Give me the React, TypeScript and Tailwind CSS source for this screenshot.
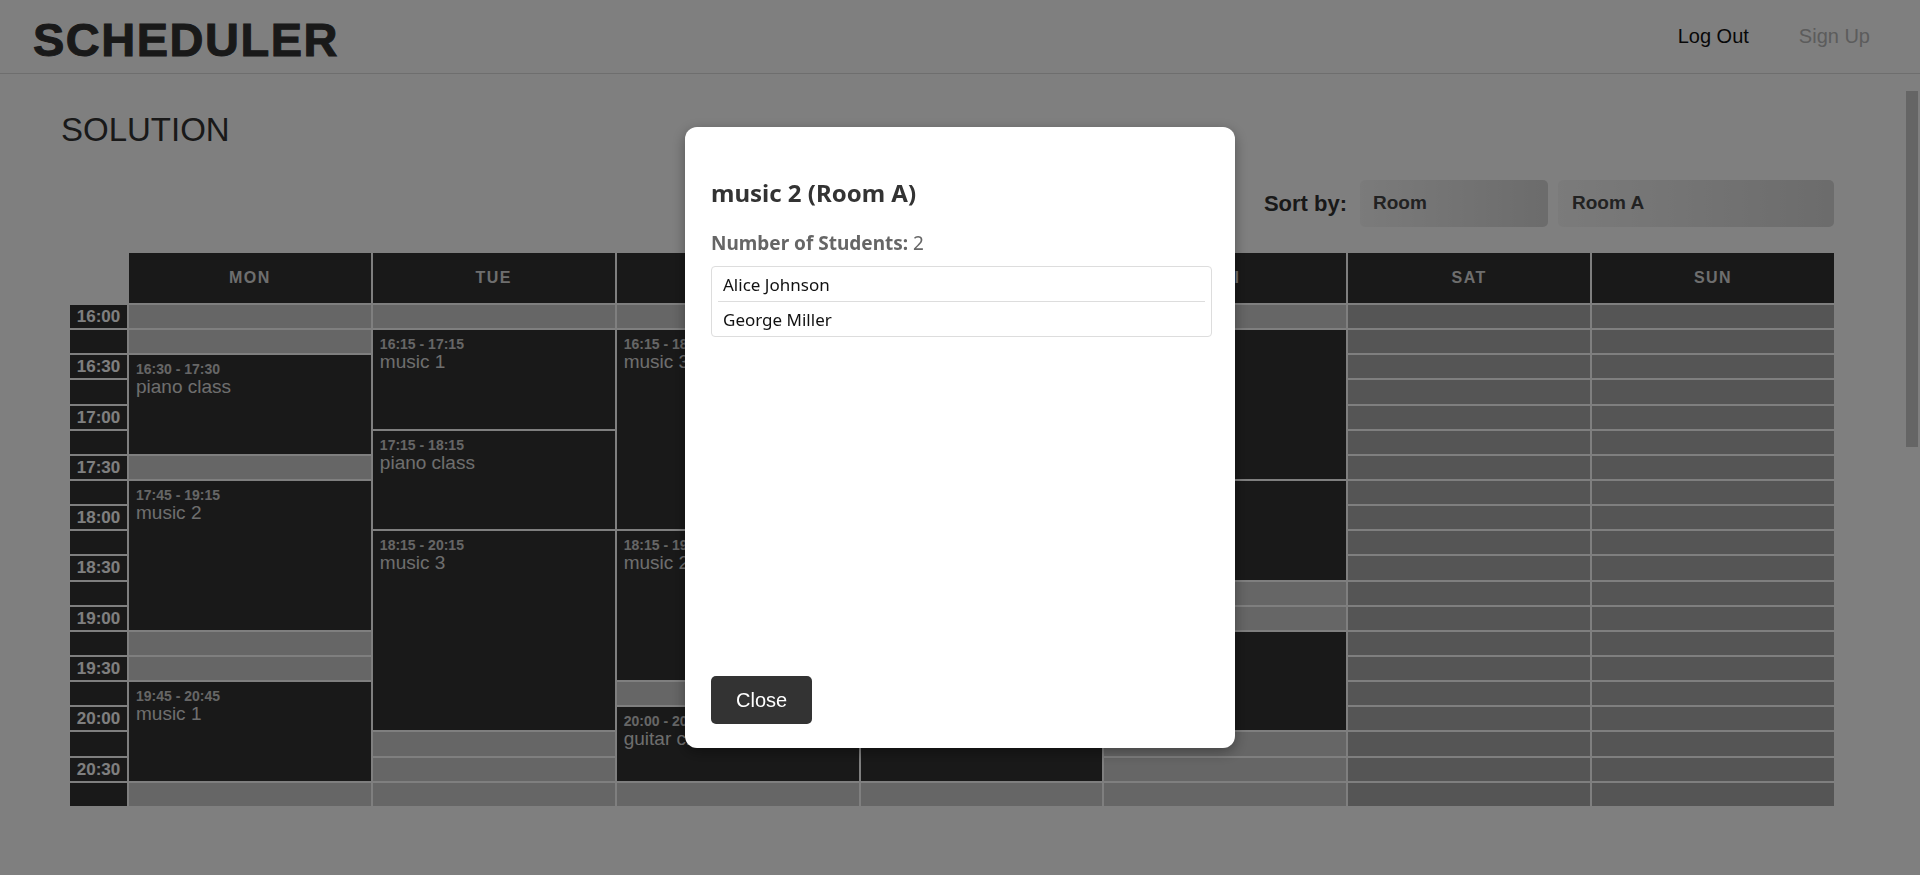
import React from 'react';

type Lesson = { start: number; len: number; title: string };

const DAYS = ['MON', 'TUE', 'WED', 'THU', 'FRI', 'SAT', 'SUN'];
const WEEKEND = ['SAT', 'SUN'];
const SLOTS = 20; // 16:00 - 20:45, 15 min each

const lessons: Record<string, Lesson[]> = {
  MON: [
    { start: 2, len: 4, title: 'piano class' },
    { start: 7, len: 6, title: 'music 2' },
    { start: 15, len: 4, title: 'music 1' },
  ],
  TUE: [
    { start: 1, len: 4, title: 'music 1' },
    { start: 5, len: 4, title: 'piano class' },
    { start: 9, len: 8, title: 'music 3' },
  ],
  WED: [
    { start: 1, len: 8, title: 'music 3' },
    { start: 9, len: 6, title: 'music 2' },
    { start: 16, len: 3, title: 'guitar class' },
  ],
  THU: [
    { start: 1, len: 6, title: 'music 2' },
    { start: 8, len: 4, title: 'piano class' },
    { start: 13, len: 6, title: 'music 1' },
  ],
  FRI: [
    { start: 1, len: 6, title: 'guitar class' },
    { start: 7, len: 4, title: 'music 3' },
    { start: 13, len: 4, title: 'piano class' },
  ],
  SAT: [],
  SUN: [],
};

const students = ['Alice Johnson', 'George Miller'];

const fmt = (slot: number) => {
  const m = 16 * 60 + slot * 15;
  return `${Math.floor(m / 60)}:${String(m % 60).padStart(2, '0')}`;
};

function ScheduleTable() {
  const rows = [];
  for (let r = 0; r < SLOTS; r++) {
    const cells: React.ReactNode[] = [];
    DAYS.forEach((day) => {
      const list = lessons[day];
      const lesson = list.find((l) => l.start === r);
      if (lesson) {
        cells.push(
          <td key={day} rowSpan={lesson.len} className="bg-[#333] p-0 pl-[7px] pt-[7px] align-top">
            <div className="text-[14px] font-bold leading-[14px] text-[#ccc]">
              {fmt(lesson.start)} - {fmt(lesson.start + lesson.len)}
            </div>
            <div className="text-[19px] leading-[21px] text-[#ddd]">{lesson.title}</div>
          </td>
        );
        return;
      }
      if (list.some((l) => r > l.start && r < l.start + l.len)) return;
      cells.push(
        <td key={day} className={`h-[23.15px] p-0 ${WEEKEND.includes(day) ? 'bg-[#aaa]' : 'bg-[#ccc]'}`} />
      );
    });
    rows.push(
      <tr key={r}>
        <td className="h-[23.15px] bg-[#333] p-0 text-center text-[17px] font-bold leading-[23px] text-white">
          {r % 2 === 0 ? fmt(r) : ''}
        </td>
        {cells}
      </tr>
    );
  }

  return (
    <table className="ml-[68px] w-[1768px] table-fixed border-separate border-spacing-[2px]">
      <thead>
        <tr>
          <th className="w-[57px] p-0" />
          {DAYS.map((d) => (
            <th key={d} className="h-[50px] bg-[#333] p-0 text-center text-[16px] font-bold tracking-[1.5px] text-[#ddd]">
              {d}
            </th>
          ))}
        </tr>
      </thead>
      <tbody>{rows}</tbody>
    </table>
  );
}

function StudentsModal() {
  return (
    <div className="fixed inset-0 flex items-center justify-center bg-black/50">
      <div className="flex h-[621px] w-[550px] flex-col rounded-[12px] bg-white pb-[24px] pl-[26px] pr-[23px] pt-[50px] font-['Noto_Sans',sans-serif] shadow-[0_4px_14px_rgba(0,0,0,0.35)]">
        <h2 className="text-[24px] font-bold leading-[32px] text-[#333]">music 2 (Room A)</h2>
        <p className="mt-[22px] text-[19px] leading-[25px] text-[#666]">
          <span className="font-bold">Number of Students:</span> 2
        </p>
        <ul className="mt-[10px] rounded-[4px] border border-[#ddd] px-[6px]">
          {students.map((s, i) => (
            <li
              key={s}
              className={`pb-[4px] pl-[5px] pt-[6px] text-[17px] leading-[24px] text-[#111] ${i < students.length - 1 ? 'border-b border-[#ddd]' : ''}`}
            >
              {s}
            </li>
          ))}
        </ul>
        <button className="mt-auto w-fit rounded-[5px] bg-[#333] px-[25px] py-[12px] font-['Liberation_Sans',Arial,sans-serif] text-[20px] leading-[24px] text-white">
          Close
        </button>
      </div>
    </div>
  );
}

export default function App() {
  return (
    <div className="flex h-screen flex-col bg-white font-['Liberation_Sans',Arial,sans-serif]">
      <header className="flex h-[74px] shrink-0 items-center justify-between border-b border-[#ddd] pl-[33px] pr-[50px]">
        <h1 className="mt-[6px] text-[47px] font-bold leading-[47px] tracking-[1.5px] text-[#333] [-webkit-text-stroke:1px_#333]">
          SCHEDULER
        </h1>
        <nav className="flex items-center gap-[50px] text-[20px] leading-[23px]">
          <a className="text-[#111]">Log Out</a>
          <a className="text-[#b8b8b8]">Sign Up</a>
        </nav>
      </header>

      <main className="flex min-h-0 flex-1">
        <div className="flex-1 overflow-y-auto [scrollbar-width:none]">
          <div className="min-h-[1764px] pt-[37px]">
            <h2 className="pl-[61px] text-[33px] leading-[37px] text-[#333]">SOLUTION</h2>

            <div className="mt-[32px] flex items-center justify-end pr-[72px]">
              <span className="mr-[13px] text-[22px] font-bold text-[#333]">Sort by:</span>
              <select className="h-[47px] w-[188px] appearance-none rounded-[5px] bg-linear-to-r from-[#f6f6f6] to-[#d8d8d8] pl-[13px] text-[19px] font-bold text-[#444] outline-none">
                <option>Room</option>
                <option>Teacher</option>
              </select>
              <select className="ml-[10px] h-[47px] w-[276px] appearance-none rounded-[5px] bg-linear-to-r from-[#f6f6f6] to-[#d8d8d8] pl-[14px] text-[19px] font-bold text-[#444] outline-none">
                <option>Room A</option>
                <option>Room B</option>
              </select>
            </div>

            <div className="mt-[24px]">
              <ScheduleTable />
            </div>
          </div>
        </div>
        {/* scrollbar rail */}
        <div className="w-[14px] shrink-0 pt-[17px]">
          <div className="h-[356px] w-[12px] bg-[#cbcbcb]" />
        </div>
      </main>

      <StudentsModal />
    </div>
  );
}
